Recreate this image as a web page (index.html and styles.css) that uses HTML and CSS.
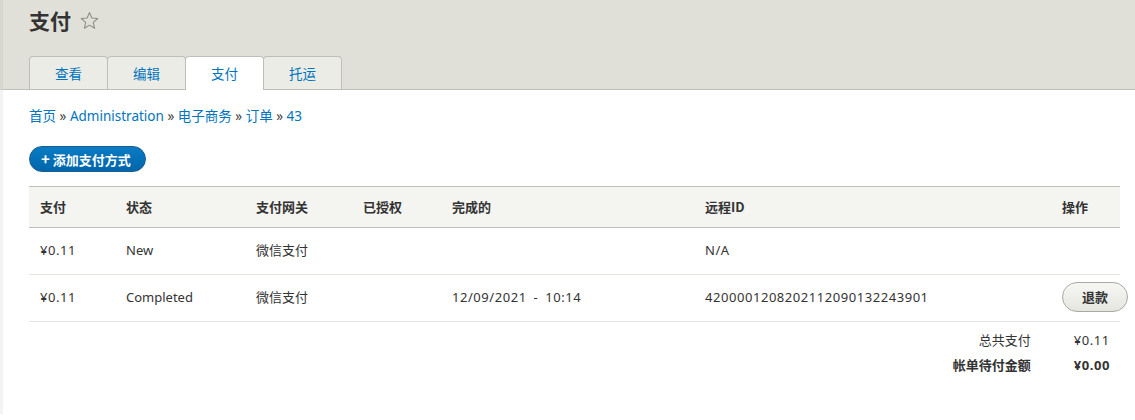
FILE: index.html
```html
<!DOCTYPE html>
<html lang="zh">
<head>
<meta charset="utf-8">
<title>支付</title>
<link rel="stylesheet" href="styles.css">
</head>
<body>
<header class="head">
  <div class="title-row">
    <h1 class="title">支付</h1>
    <svg class="star" width="19" height="19" viewBox="0 0 20 20" aria-hidden="true">
      <path d="M10 1.6 L12.5 7.4 L18.7 7.9 L14 12 L15.4 18.2 L10 14.9 L4.6 18.2 L6 12 L1.3 7.9 L7.5 7.4 Z" fill="none" stroke="#8c8c86" stroke-width="1.1" stroke-linejoin="round"/>
    </svg>
  </div>
  <nav class="tabs">
    <a class="tab" href="#">查看</a>
    <a class="tab" href="#">编辑</a>
    <a class="tab active" href="#">支付</a>
    <a class="tab" href="#">托运</a>
  </nav>
</header>
<main class="content">
  <div class="crumbs">
    <a href="#">首页</a> <span class="sep">»</span> <a href="#">Administration</a> <span class="sep">»</span> <a href="#">电子商务</a> <span class="sep">»</span> <a href="#">订单</a> <span class="sep">»</span> <a href="#">43</a>
  </div>
  <a class="add-btn" href="#"><span class="plus">+</span> 添加支付方式</a>
  <table class="payments">
    <thead>
      <tr>
        <th class="c1">支付</th>
        <th class="c2">状态</th>
        <th class="c3">支付网关</th>
        <th class="c4">已授权</th>
        <th class="c5">完成的</th>
        <th class="c6">远程ID</th>
        <th class="c7">操作</th>
      </tr>
    </thead>
    <tbody>
      <tr>
        <td class="num">¥0.11</td>
        <td>New</td>
        <td>微信支付</td>
        <td></td>
        <td></td>
        <td class="num">N/A</td>
        <td></td>
      </tr>
      <tr>
        <td class="num">¥0.11</td>
        <td>Completed</td>
        <td>微信支付</td>
        <td></td>
        <td class="num">12/09/2021 <span class="dash">-</span> 10:14</td>
        <td class="num">4200001208202112090132243901</td>
        <td><a class="refund" href="#">退款</a></td>
      </tr>
    </tbody>
  </table>
  <div class="totals">
    <span class="label">总共支付</span><span class="value num">¥0.11</span>
    <span class="label strong">帐单待付金额</span><span class="value num strong">¥0.00</span>
  </div>
</main>
</body>
</html>
```

FILE: styles.css
```css
* { box-sizing: border-box; }
html, body {
  margin: 0;
  padding: 0;
  background: #fff;
  color: #333;
  font-family: "Noto Sans", "Noto Sans CJK SC", sans-serif;
  font-size: 13px;
}
a { text-decoration: none; color: #0074bd; }

.head {
  background: #e0e0d8;
  border-left: 3px solid #d7d7cf;
  border-bottom: 1px solid #bebfb9;
  padding: 0 0 0 26px;
  height: 90px;
  display: flex;
  flex-direction: column;
}
.title-row {
  display: flex;
  align-items: center;
  gap: 9px;
  height: 40px;
  padding-top: 1px;
}
.title {
  margin: 0;
  font-size: 21px;
  font-weight: 700;
  color: #333;
  line-height: 28px;
  font-family: "Noto Sans CJK SC", sans-serif;
}
.star { display: block; }

.tabs {
  display: flex;
  margin-top: 17px;
  height: 33px;
}
.tab {
  display: flex;
  align-items: center;
  justify-content: center;
  height: 33px;
  padding: 0 25px 1px;
  background: #ececE7;
  border: 1px solid #bfbfba;
  border-bottom: none;
  border-radius: 4px 4px 0 0;
  margin-right: -1px;
  font-size: 13.5px;
  color: #0074bd;
  font-family: "Noto Sans CJK SC", sans-serif;
}
.tab.active {
  background: #fff;
  height: 34px;
  position: relative;
  z-index: 1;
}

.content {
  border-left: 3px solid #f3f3f3;
  padding: 17px 15px 40px 26px;
}
.crumbs {
  line-height: 18px;
  font-size: 13.5px;
  color: #333;
}
.crumbs .sep { color: #444; }

.add-btn {
  display: inline-block;
  margin-top: 21px;
  height: 26px;
  line-height: 24px;
  padding: 0 14px 0 11px;
  border: 1px solid #1a5d92;
  border-radius: 13px;
  background: linear-gradient(#0a7bc3, #0066ab);
  color: #fff;
  font-weight: 700;
  font-size: 13px;
  font-family: "Noto Sans CJK SC", sans-serif;
}
.plus {
  font-weight: 700;
  font-size: 15px;
}

.payments {
  margin-top: 14px;
  width: 1091px;
  border-collapse: collapse;
  table-layout: fixed;
}
.payments th {
  background: #f4f4f0;
  border-top: 1px solid #bebfb9;
  border-bottom: 1px solid #bebfb9;
  height: 41px;
  padding: 0 11px 2px;
  text-align: left;
  font-weight: 700;
  font-family: "Noto Sans CJK SC", sans-serif;
  color: #333;
}
.payments td {
  height: 47px;
  padding: 0 11px 3px;
  border-bottom: 1px solid #e6e6e1;
  white-space: nowrap;
  color: #333;
}
.c1 { width: 86px; }
.c2 { width: 130px; }
.c3 { width: 107px; }
.c4 { width: 89px; }
.c5 { width: 253px; }
.c6 { width: 357px; }
.c7 { width: 69px; }
.num { letter-spacing: 0.55px; }
.dash { margin: 0 3px; }

.refund {
  display: inline-block;
  width: 66px;
  height: 30px;
  line-height: 28px;
  text-align: center;
  border: 1px solid #a9a9a5;
  border-radius: 15px;
  background: linear-gradient(#f6f6f3, #e6e6e0);
  color: #333;
  font-weight: 700;
  font-size: 13px;
  font-family: "Noto Sans CJK SC", sans-serif;
}

.totals {
  display: grid;
  grid-template-columns: auto auto;
  justify-content: end;
  column-gap: 43px;
  row-gap: 7px;
  margin-top: 9px;
  padding-right: 10px;
  width: 1091px;
  line-height: 18px;
}
.totals .label { text-align: right; }
.totals .strong { font-weight: 700; }
```
